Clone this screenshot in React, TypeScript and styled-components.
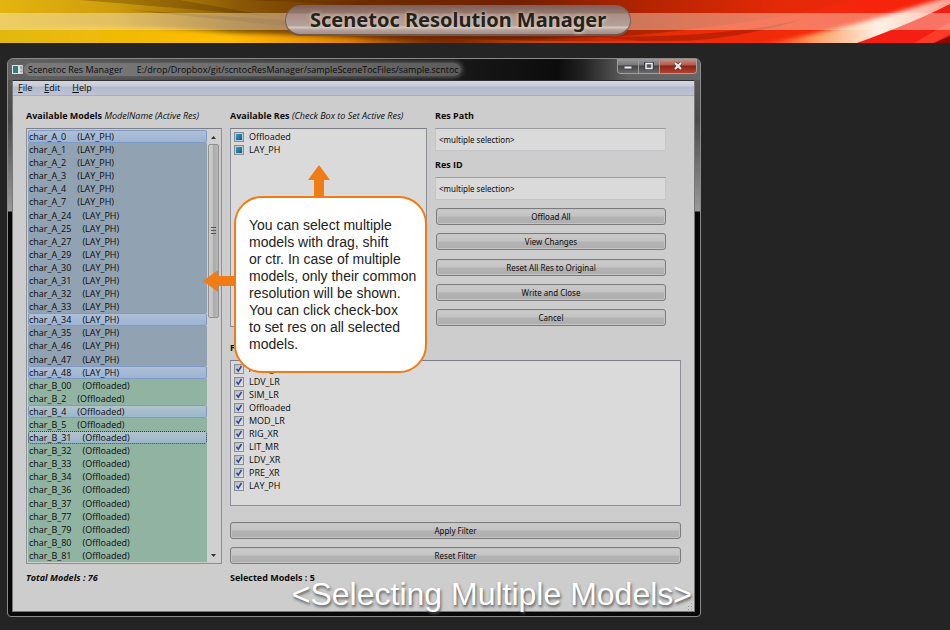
import React from 'react';
import styled, { createGlobalStyle, css } from 'styled-components';

const Global = createGlobalStyle`
  *, *::before, *::after { box-sizing: border-box; }
  body { margin: 0; background: #242424; color: #0c0c0c; font-family: 'Open Sans', Tahoma, sans-serif; font-size: 9px; line-height: 13px; }
  button, input { font: inherit; color: inherit; }
  ul { list-style: none; margin: 0; padding: 0; }
`;

const Banner = styled.header`
  position: relative;
  height: 43px;
  display: flex;
  justify-content: center;
  align-items: flex-start;
  padding: 5px 34px 0 0;
  overflow: hidden;
`;
const BannerArt = styled.svg`
  position: absolute;
  inset: 0;
  width: 100%;
  height: 100%;
`;
const Title = styled.h1`
  position: relative;
  margin: 0;
  height: 31px;
  min-width: 346px;
  padding: 0 16px 0 24px;
  border-radius: 16px;
  border: 1px solid #78625a;
  border-bottom: 2px solid #6e5850;
  background: linear-gradient(#80605a 0, #95786c 7px, #aa8e84 8px, #b5a19b 20px, #d8cbc6 21px, #b3a19a 24px, #a58e85 100%);
  color: #25221a;
  font-family: 'Noto Sans', 'Open Sans', sans-serif;
  font-size: 20px;
  line-height: 27px;
  font-weight: 700;
  white-space: nowrap;
  text-shadow: 0 0 4px #d4c5b8, 0 1px 3px #d4c5b8;
`;

const Stage = styled.main`
  padding: 15px 249px 14px 7px;
`;
const Window = styled.section`
  position: relative;
  padding: 0 5px 4px 4px;
  border: 1px solid #8b8b8b;
  border-radius: 6px 6px 4px 4px;
  background: linear-gradient(#5c5c5c 0, #4a4a4a 60px, #999 152px, #080808 153px, #080808 100%);
`;
const TitleBar = styled.div`
  display: flex;
  justify-content: space-between;
  height: 21px;
  margin: 0 -5px 0 -4px;
  padding: 0 3px 0 4px;
  border-radius: 5px 5px 0 0;
  background: linear-gradient(90deg, #626262 0, #555 80px, #171717 460px, #0c0c0c 550px, #222 575px, #626262 620px, #666 100%);
`;
const Caption = styled.div`
  display: flex;
  align-items: center;
  height: 20px;
  white-space: nowrap;
  svg { margin-right: 5px; }
`;
const CaptionText = styled.span`
  padding: 0 2px 0 4px;
  margin-left: -4px;
  border-radius: 8px;
  background: linear-gradient(90deg, #7a7a7a 0, #6c6c6c 60%, #5c5c5c 100%);
  box-shadow: 0 0 5px 1px #646464;
  white-space: pre;
`;
const WindowControls = styled.div`
  display: flex;
  height: 15px;
  border: 1px solid #a0a0a0;
  border-top: 0;
  border-radius: 0 0 4px 4px;
  overflow: hidden;
`;
const ControlButton = styled.button<{ $close?: boolean }>`
  width: ${p => (p.$close ? 36 : 21)}px;
  height: 14px;
  padding: 0;
  display: flex;
  align-items: center;
  justify-content: center;
  border: 0;
  border-right: ${p => (p.$close ? 0 : 1)}px solid #999;
  background: ${p => p.$close
    ? 'linear-gradient(#c79289, #b4584b 6px, #8c2415 7px, #b4422f)'
    : 'linear-gradient(#999, #777 6px, #454545 7px, #6a6a6a)'};
`;

const Client = styled.div`
  min-height: 532px;
  border: 1px solid #777;
  border-top-color: #303030;
  background: #cdcdcd;
`;
const MenuBar = styled.nav`
  display: flex;
  gap: 12px;
  height: 15px;
  padding: 0 5px;
  background: linear-gradient(#d6d8df 0, #c8ccd9 5px, #b3b9cc 6px, #bec4d5 100%);
  border-bottom: 1px solid #a9adb9;
`;
const MenuItem = styled.button`
  padding: 0;
  border: 0;
  background: none;
  line-height: 14px;
`;

const Body = styled.div`
  display: grid;
  grid-template-columns: 196fr 451fr;
  gap: 8px;
  padding: 13px 13px 26px;
`;
const Column = styled.div`
  display: flex;
  flex-direction: column;
  min-width: 0;
`;
const Heading = styled.h2`
  margin: 0;
  height: 19px;
  font-size: 9px;
  line-height: 13px;
  font-weight: 700;
  white-space: nowrap;
  em { font-weight: 400; }
`;
const boxEdge = css`
  border: 1px solid #8d9099;
  border-top-color: #7c7f88;
`;
const ModelBox = styled.div`
  ${boxEdge}
  display: flex;
  height: 436px;
  padding: 1px;
`;
const ModelList = styled.ul`
  flex: 1;
  min-width: 0;
  display: grid;
  grid-auto-rows: 1fr;
`;
const ModelRow = styled.li<{ $offloaded: boolean; $selected: boolean; $focused: boolean }>`
  display: flex;
  align-items: center;
  gap: 11px;
  min-height: 0;
  line-height: 11px;
  border: 1px solid transparent;
  background: ${p => (p.$offloaded ? '#90b3a2' : '#91a2b2')};
  ${p => p.$selected && css`
    border-color: #7f9ac4;
    border-radius: 2px;
    background: linear-gradient(${p.$offloaded ? '#b0c4cc, #9bb5cb' : '#afc0d6, #9cb3d3'});
  `}
  ${p => p.$focused && css`border: 1px dotted #27364a;`}
`;
const ScrollBar = styled.div`
  width: 13px;
  display: flex;
  flex-direction: column;
  background: #d0d0d0;
`;
const ScrollArrow = styled.button`
  height: 14px;
  padding: 0;
  border: 0;
  background: none;
  display: flex;
  align-items: center;
  justify-content: center;
`;
const ScrollTrack = styled.div`
  flex: 1;
  padding: 0 1px;
`;
const ScrollThumb = styled.div`
  height: 43%;
  display: flex;
  align-items: center;
  justify-content: center;
  border: 1px solid #929292;
  border-radius: 2px;
  background: linear-gradient(90deg, #ccc 0, #c2c2c2 45%, #aaa 50%, #b8b8b8 100%);
`;
const Total = styled.p<{ $italic?: boolean }>`
  margin: 7px 0 0;
  font-weight: 700;
  font-style: ${p => (p.$italic ? 'italic' : 'normal')};
`;

const TopRight = styled.div`
  display: grid;
  grid-template-columns: 197fr 231fr;
  gap: 8px;
  padding-right: 15px;
  height: 218px;
`;
const CheckBoxPanel = styled.ul<{ $height: number }>`
  ${boxEdge}
  height: ${p => p.$height}px;
  padding: 1px 3px;
  background: #dadada;
`;
const CheckRow = styled.li`
  height: 13px;
  label { display: flex; align-items: center; gap: 5px; }
`;
const CheckInput = styled.input<{ $kind: 'tick' | 'partial' }>`
  appearance: none;
  flex: none;
  width: 10px;
  height: 10px;
  margin: 0;
  border: 1px solid #8a8f96;
  background: linear-gradient(135deg, #b5bac2, #e3e5e8);
  &:checked {
    background: ${p => p.$kind === 'partial'
      ? 'linear-gradient(135deg, #33a3cc, #0e5b86) center / 6px 6px no-repeat, #c2c8cc'
      : `url("data:image/svg+xml,%3Csvg xmlns='http://www.w3.org/2000/svg' viewBox='0 0 8 8'%3E%3Cpath d='M1.5 3.8L3.3 6.2L6.5 1' fill='none' stroke='%2334478e' stroke-width='1.5'/%3E%3C/svg%3E") center / 8px 8px, linear-gradient(135deg, #b5bac2, #e3e5e8)`};
  }
`;
const PathInput = styled.input`
  width: 100%;
  height: 23px;
  margin-bottom: 7px;
  padding: 0 3px;
  border: 1px solid #c3c5ca;
  border-top-color: #999b9f;
  background: #dadada;
  font-family: 'Noto Sans', 'Open Sans', sans-serif;
  font-size: 8px;
`;
const ButtonStack = styled.div`
  flex: 1;
  display: flex;
  flex-direction: column;
  justify-content: space-between;
  padding: 1px 0 1px 1px;
`;
const PushButton = styled.button`
  width: 100%;
  height: 17px;
  padding: 0;
  border: 1px solid #7c7c7c;
  border-radius: 3px;
  background: linear-gradient(#cbcbcb 0, #c3c3c3 7px, #b3b3b3 8px, #aeaeae 100%);
  box-shadow: inset 0 0 0 1px #c4c4c4;
  font-family: 'Noto Sans', 'Open Sans', sans-serif;
  font-size: 8px;
  line-height: 15px;
`;
const FilterHeading = styled(Heading)`
  margin-top: 14px;
`;
const FilterButtons = styled.div`
  display: grid;
  gap: 8px;
  margin-top: 16px;
`;

const Callout = styled.aside`
  position: absolute;
  left: 226px;
  top: 137px;
  width: 193px;
  height: 177px;
  padding: 19px 0 0 13px;
  border: 2px solid #f07c16;
  border-radius: 28px;
  background: #fff;
  color: #222;
  font-family: 'Liberation Sans', Arial, sans-serif;
  font-size: 14px;
  line-height: 17px;
  white-space: pre;
`;
const Arrow = styled.svg<{ $side: 'top' | 'left' }>`
  position: absolute;
  ${p => (p.$side === 'top' ? 'left: 72px; top: -33px;' : 'left: -33px; top: 72px;')}
`;
const Slogan = styled.p`
  position: absolute;
  right: 8px;
  bottom: 3px;
  margin: 0;
  color: #fff;
  font-family: 'Liberation Sans', Arial, sans-serif;
  font-size: 32px;
  line-height: 38px;
  white-space: nowrap;
  text-shadow: 1px 2px 3px #555;
`;
const Grip = styled.svg`
  position: absolute;
  right: 7px;
  bottom: 6px;
`;

const suffixesA = ['0', '1', '2', '3', '4', '7', '24', '25', '27', '29', '30', '31', '32', '33', '34', '35', '46', '47', '48'];
const suffixesB = ['00', '2', '4', '5', '31', '32', '33', '34', '36', '37', '77', '79', '80', '81'];
const models = [
  ...suffixesA.map(s => ({ name: `char_A_${s}`, res: 'LAY_PH' })),
  ...suffixesB.map(s => ({ name: `char_B_${s}`, res: 'Offloaded' })),
];
const selected = new Set(['char_A_0', 'char_A_34', 'char_A_48', 'char_B_4', 'char_B_31']);
const filters = ['ANM_LR', 'LDV_LR', 'SIM_LR', 'Offloaded', 'MOD_LR', 'RIG_XR', 'LIT_MR', 'LDV_XR', 'PRE_XR', 'LAY_PH'];
const actions = ['Offload All', 'View Changes', 'Reset All Res to Original', 'Write and Close', 'Cancel'];

function Checks({ items, kind, height }: { items: string[]; kind: 'tick' | 'partial'; height: number }) {
  return (
    <CheckBoxPanel $height={height}>
      {items.map(item => (
        <CheckRow key={item}>
          <label><CheckInput type="checkbox" defaultChecked $kind={kind} />{item}</label>
        </CheckRow>
      ))}
    </CheckBoxPanel>
  );
}

function BannerDrawing() {
  return (
    <BannerArt viewBox="0 0 950 43" preserveAspectRatio="none" aria-hidden="true">
      <defs>
        <linearGradient id="base">
          <stop offset="0" stopColor="#e4b510" />
          <stop offset=".12" stopColor="#cf9d0c" />
          <stop offset=".25" stopColor="#8a5905" />
          <stop offset=".38" stopColor="#6d2c00" />
          <stop offset=".55" stopColor="#742000" />
          <stop offset=".68" stopColor="#b42400" />
          <stop offset=".82" stopColor="#e52906" />
          <stop offset="1" stopColor="#f32812" />
        </linearGradient>
        <linearGradient id="glow">
          <stop offset="0" stopColor="#e0b80c" />
          <stop offset=".5" stopColor="#ffbd00" />
          <stop offset=".75" stopColor="#e08200" />
          <stop offset="1" stopColor="#a64600" stopOpacity="0" />
        </linearGradient>
        <linearGradient id="ember">
          <stop offset="0" stopColor="#a84000" stopOpacity="0" />
          <stop offset=".4" stopColor="#c94a00" />
          <stop offset="1" stopColor="#ff4a18" stopOpacity="0" />
        </linearGradient>
        <linearGradient id="flame">
          <stop offset="0" stopColor="#e02a04" stopOpacity="0" />
          <stop offset=".4" stopColor="#f03008" stopOpacity=".8" />
          <stop offset="1" stopColor="#f8200c" />
        </linearGradient>
        <linearGradient id="swoosh">
          <stop offset="0" stopColor="#f85a18" stopOpacity="0" />
          <stop offset=".35" stopColor="#ffa060" />
          <stop offset=".65" stopColor="#fff0e8" />
          <stop offset="1" stopColor="#ff9a88" />
        </linearGradient>
        <filter id="soft"><feGaussianBlur stdDeviation="2" /></filter>
      </defs>
      <rect width="950" height="43" fill="url(#base)" />
      <path d="M-10 28 Q130 24 230 33 Q340 36 470 43 L470 50 L-10 50Z" fill="url(#glow)" filter="url(#soft)" />
      <path d="M80 0 L270 16 L180 0Z M130 10 L285 26 L285 20Z M250 0 L390 6 L310 0Z" fill="#4c2a00" opacity=".3" />
      <path d="M475 38 Q600 42 700 28 Q790 18 855 0 L950 0 L950 43 L475 43Z" fill="url(#flame)" />
      <path d="M600 37 Q720 38 800 20 Q720 45 640 41Z" fill="#971500" opacity=".5" />
      <path d="M430 38 Q560 43 720 40 V50 H430Z" fill="url(#ember)" />
      <path d="M740 48 Q850 30 955 -6 L955 6 L870 48Z" fill="url(#swoosh)" filter="url(#soft)" />
      <path d="M857 43 Q915 22 950 4 L950 43Z" fill="#f41e12" />
      <path d="M914 43 L950 22 V34 L934 43Z" fill="#ff5a40" opacity=".5" />
      <path d="M934 43 L950 36 V43Z" fill="#8c0804" />
      <rect y="13" width="950" height="17" fill="#fff2df" opacity=".4" />
    </BannerArt>
  );
}

export default function App() {
  return (
    <>
      <Global />
      <Banner>
        <BannerDrawing />
        <Title>Scenetoc Resolution Manager</Title>
      </Banner>
      <Stage>
        <Window aria-label="Scenetoc Res Manager">
          <TitleBar>
            <Caption>
              <svg width="11" height="9" viewBox="0 0 11 9" aria-hidden="true">
                <rect width="11" height="9" fill="#dfe6e8" />
                <rect x="1" y="1" width="5" height="7" fill="#397b78" />
                <path d="M8 1h2v3H8zM8 6h2v1H8z" fill="#a6b7be" />
              </svg>
              <CaptionText>{'Scenetoc Res Manager      E:/drop/Dropbox/git/scntocResManager/sampleSceneTocFiles/sample.scntoc'}</CaptionText>
            </Caption>
            <WindowControls>
              <ControlButton aria-label="Minimize">
                <svg width="10" height="8"><rect x="1" y="4" width="8" height="3" fill="#eee" stroke="#454555" strokeWidth="1" /></svg>
              </ControlButton>
              <ControlButton aria-label="Maximize">
                <svg width="10" height="8"><rect x="1.5" y="1.5" width="7" height="5" fill="none" stroke="#3d3d4d" strokeWidth="3" /><rect x="2" y="1.5" width="6" height="5" fill="#555" stroke="#eee" strokeWidth="1.5" /></svg>
              </ControlButton>
              <ControlButton $close aria-label="Close">
                <svg width="10" height="8"><path d="M2 1L8 7M8 1L2 7" stroke="#444158" strokeWidth="3.5" /><path d="M2 1L8 7M8 1L2 7" stroke="#f3eeee" strokeWidth="2" /></svg>
              </ControlButton>
            </WindowControls>
          </TitleBar>
          <Client>
            <MenuBar>
              <MenuItem><u>F</u>ile</MenuItem>
              <MenuItem><u>E</u>dit</MenuItem>
              <MenuItem><u>H</u>elp</MenuItem>
            </MenuBar>
            <Body>
              <Column>
                <Heading>Available Models <em>ModelName (Active Res)</em></Heading>
                <ModelBox>
                  <ModelList>
                    {models.map(m => (
                      <ModelRow key={m.name} $offloaded={m.res === 'Offloaded'} $selected={selected.has(m.name)} $focused={m.name === 'char_B_31'}>
                        <span>{m.name}</span><span>({m.res})</span>
                      </ModelRow>
                    ))}
                  </ModelList>
                  <ScrollBar>
                    <ScrollArrow aria-label="Scroll up"><svg width="5" height="3"><path d="M0 3L2.5 0L5 3Z" fill="#333" /></svg></ScrollArrow>
                    <ScrollTrack>
                      <ScrollThumb><svg width="5" height="7"><path d="M0 .5H5M0 3.5H5M0 6.5H5" stroke="#555" /></svg></ScrollThumb>
                    </ScrollTrack>
                    <ScrollArrow aria-label="Scroll down"><svg width="5" height="3"><path d="M0 0L2.5 3L5 0Z" fill="#333" /></svg></ScrollArrow>
                  </ScrollBar>
                </ModelBox>
                <Total $italic>Total Models : 76</Total>
              </Column>
              <Column>
                <TopRight>
                  <Column>
                    <Heading>Available Res <em>(Check Box to Set Active Res)</em></Heading>
                    <Checks items={['Offloaded', 'LAY_PH']} kind="partial" height={199} />
                  </Column>
                  <Column>
                    <Heading as="label" htmlFor="res-path">Res Path</Heading>
                    <PathInput id="res-path" defaultValue="<multiple selection>" />
                    <Heading as="label" htmlFor="res-id">Res ID</Heading>
                    <PathInput id="res-id" defaultValue="<multiple selection>" />
                    <ButtonStack>
                      {actions.map(a => <PushButton key={a}>{a}</PushButton>)}
                    </ButtonStack>
                  </Column>
                </TopRight>
                <FilterHeading>Filter Res</FilterHeading>
                <Checks items={filters} kind="tick" height={146} />
                <FilterButtons>
                  <PushButton>Apply Filter</PushButton>
                  <PushButton>Reset Filter</PushButton>
                </FilterButtons>
                <Total>Selected Models : 5</Total>
              </Column>
            </Body>
          </Client>
          <Grip width="7" height="7" aria-hidden="true"><path d="M5 0h1v1H5zM5 3h1v1H5zM2 3h1v1H2zM5 6h1v1H5zM2 6h1v1H2z" fill="#999" /></Grip>
          <Callout>
            <Arrow $side="top" width="22" height="32"><path d="M11 0L22 15H16V32H6V15H0Z" fill="#f07c16" /></Arrow>
            <Arrow $side="left" width="32" height="22"><path d="M0 11L15 0V6H32V16H15V22Z" fill="#f07c16" /></Arrow>
            {'You can select multiple\nmodels with drag, shift\nor ctr. In case of multiple\nmodels, only their common\nresolution will be shown.\nYou can click check-box\nto set res on all selected\nmodels.'}
          </Callout>
          <Slogan>&lt;Selecting Multiple Models&gt;</Slogan>
        </Window>
      </Stage>
    </>
  );
}
